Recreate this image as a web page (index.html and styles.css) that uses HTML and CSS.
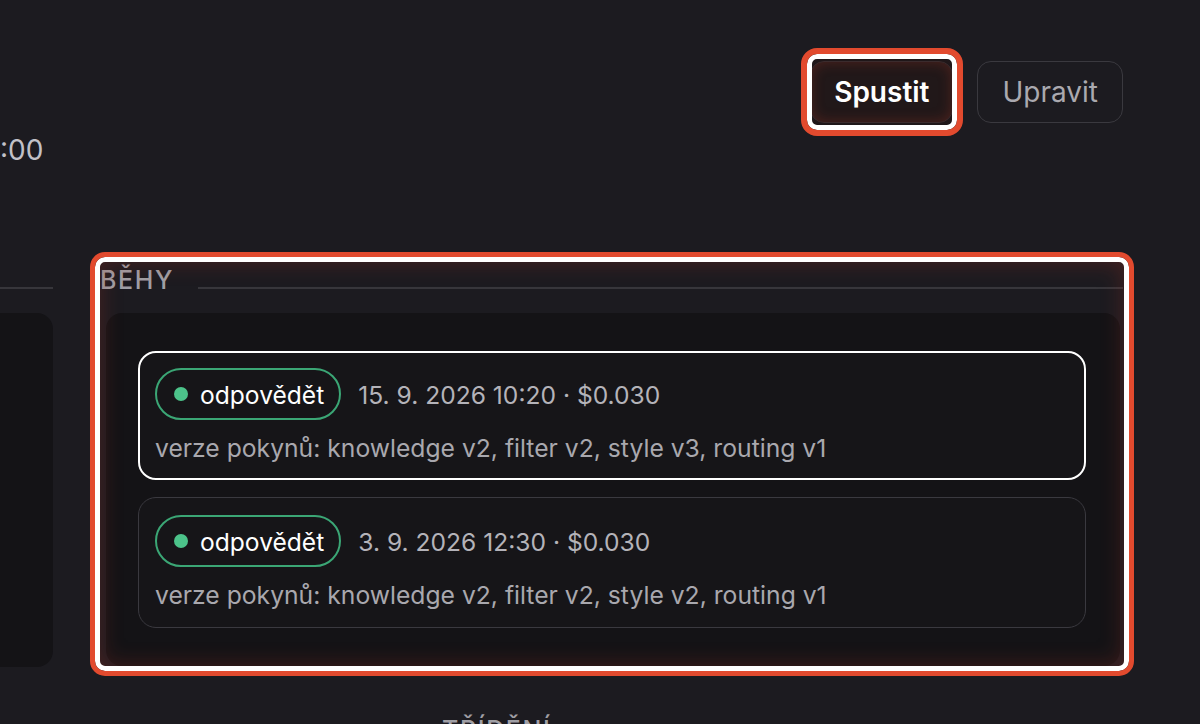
FILE: index.html
```html
<!DOCTYPE html>
<html lang="cs">
  <head>
    <meta charset="UTF-8" />
    <meta name="viewport" content="width=device-width, initial-scale=1.0" />
    <title>Běhy</title>
    <link rel="stylesheet" href="styles.css">
  </head>
  <body>
    <div class="page">
      <header class="topbar">
        <div class="meta">:00</div>
        <div class="actions">
          <button class="btn btn-primary highlighted">Spustit</button>
          <button class="btn">Upravit</button>
        </div>
      </header>

      <div class="columns">
        <section class="column column-side">
          <div class="section-title"><span class="rule"></span></div>
          <div class="side-panel"></div>
        </section>

        <section class="column highlighted-box">
          <div class="section-title">
            <h3>Běhy</h3>
            <span class="rule"></span>
          </div>
          <div class="runs-panel">
            <div class="run-card selected">
              <div class="run-head">
                <span class="status-pill"><span class="dot"></span>odpovědět</span>
                <span class="run-date">15. 9. 2026 10:20 · $0.030</span>
              </div>
              <div class="run-detail">verze pokynů: knowledge v2, filter v2, style v3, routing v1</div>
            </div>
            <div class="run-card">
              <div class="run-head">
                <span class="status-pill"><span class="dot"></span>odpovědět</span>
                <span class="run-date">3. 9. 2026 12:30 · $0.030</span>
              </div>
              <div class="run-detail">verze pokynů: knowledge v2, filter v2, style v2, routing v1</div>
            </div>
          </div>
        </section>
      </div>

      <div class="lower">
        <div></div>
        <section class="column">
          <div class="section-title">
            <h3>Třídění</h3>
            <span class="rule"></span>
          </div>
        </section>
      </div>
    </div>
  </body>
</html>
```

FILE: styles.css
```css
body {
  margin: 0;
  height: 724px;
  overflow: hidden;
  background-color: #1c1b20;
  font-family: Inter, "Noto Sans", sans-serif;
  color: #b3b2b8;
}
.page {
  padding: 0 77px 0 0;
}
.topbar {
  display: flex;
  justify-content: space-between;
  align-items: flex-start;
  padding-top: 61px;
}
.meta {
  margin-top: 72px;
  font-size: 28px;
  line-height: 35px;
  color: #c2c1c7;
}
.actions {
  display: flex;
  align-items: center;
  gap: 24px;
}
.btn {
  height: 62px;
  padding: 0 24px;
  border: 1px solid #3a393f;
  border-radius: 14px;
  background: transparent;
  color: #aaa9af;
  font-family: inherit;
  font-size: 28px;
  font-weight: 400;
}
.btn-primary {
  padding: 0 23px;
  background: #211819;
  border-color: #3b2b2d;
  color: #fff;
  font-weight: 600;
  box-shadow: inset 0 0 14px rgba(200, 60, 40, 0.28), 0 0 0 4px #1f1719;
}
.highlighted {
  position: relative;
}
.highlighted::after {
  content: "";
  position: absolute;
  top: -14px;
  bottom: -14px;
  left: -10px;
  right: -11px;
  border: 6px solid #e24a2e;
  border-radius: 16px;
  box-shadow: inset 0 0 0 5px #fff;
  pointer-events: none;
}
.columns {
  display: grid;
  grid-template-columns: 53px 1fr;
  gap: 47px;
  margin-top: 94px;
  align-items: start;
}
.section-title {
  display: flex;
  align-items: flex-end;
  gap: 24px;
  height: 31px;
  margin-bottom: 20px;
}
.section-title h3 {
  margin: 0;
  font-size: 25px;
  line-height: 25px;
  font-weight: 500;
  letter-spacing: 1.6px;
  text-transform: uppercase;
  color: #a09fa5;
}
.rule {
  flex: 1;
  height: 2px;
  margin-bottom: 4px;
  background: #37363b;
}
.side-panel {
  margin-left: -20px;
  height: 354px;
  background: #141316;
  border-radius: 16px;
}
.highlighted-box {
  position: relative;
}
.highlighted-box::after {
  content: "";
  position: absolute;
  top: -10px;
  bottom: -10px;
  left: -10px;
  right: -11px;
  border: 5px solid #e24a2e;
  border-radius: 15px;
  box-shadow: inset 0 0 0 5px #fff, inset 0 0 22px 6px rgba(170, 50, 35, 0.3);
  pointer-events: none;
}
.runs-panel {
  display: flex;
  flex-direction: column;
  gap: 17px;
  margin: 0 3px 0 6px;
  padding: 38px 34px 38px 32px;
  background: #141316;
  border-radius: 16px;
}
.run-card {
  display: flex;
  flex-direction: column;
  gap: 13px;
  padding: 17px 17px 17px 16px;
  border: 1px solid #3a393f;
  border-radius: 18px;
  background: #161518;
}
.run-card.selected {
  padding: 15px;
  border: 2px solid #fff;
}
.run-head {
  display: flex;
  align-items: center;
  gap: 17px;
}
.status-pill {
  display: inline-flex;
  align-items: center;
  gap: 12px;
  height: 52px;
  box-sizing: border-box;
  padding: 2px 15px 0 17px;
  border: 2px solid #3ba675;
  border-radius: 26px;
  color: #fff;
  font-size: 24.6px;
}
.dot {
  width: 14px;
  height: 14px;
  margin-bottom: 2px;
  border-radius: 50%;
  background: #4cc38a;
}
.run-date {
  padding-top: 2px;
  font-size: 24.6px;
  color: #b4b3b9;
}
.run-detail {
  font-size: 24.7px;
  line-height: 30px;
  color: #a9a8ae;
}
.lower {
  display: grid;
  grid-template-columns: 395px 1fr;
  gap: 47px;
  margin-top: 45px;
}
```
